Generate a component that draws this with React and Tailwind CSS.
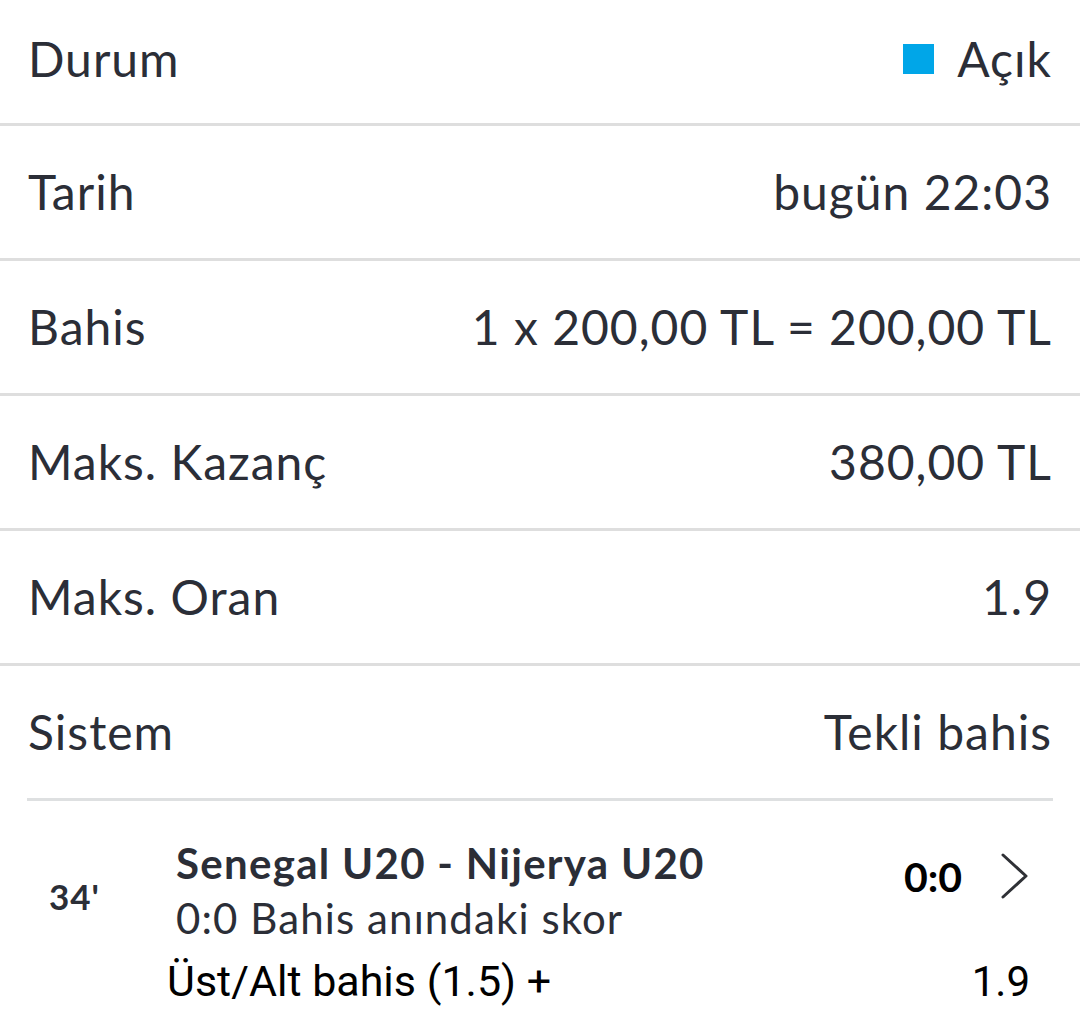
import React from 'react';

const rows = [
  { label: 'Durum', value: 'Açık', status: true },
  { label: 'Tarih', value: 'bugün 22:03' },
  { label: 'Bahis', value: '1 x 200,00 TL = 200,00 TL' },
  { label: 'Maks. Kazanç', value: '380,00 TL' },
  { label: 'Maks. Oran', value: '1.9' },
  { label: 'Sistem', value: 'Tekli bahis' },
];

const ChevronRight = () => (
  <svg width="30" height="46" viewBox="0 0 30 46" fill="none">
    <path d="M3 2 L26 23 L3 44" stroke="#2f3136" strokeWidth="3" strokeLinecap="round" strokeLinejoin="round" />
  </svg>
);

export default function App() {
  return (
    <div className="w-[1080px] h-[1034px] bg-white overflow-hidden text-[#2b2e37]" style={{ fontFamily: 'Lato, "Noto Sans", sans-serif' }}>
      {rows.map((row, i) => (
        <div key={row.label}>
          <div className={`flex items-center justify-between px-[28px] ${i === 0 ? 'h-[123px] pb-[5px]' : 'h-[132px]'}`}>
            <span className="text-[48px] leading-none tracking-[1px]">{row.label}</span>
            <span className="flex items-center text-[48px] leading-none tracking-[1px]">
              {row.status && <span className="w-[31px] h-[30px] bg-[#00a6e8] mr-[23px]"></span>}
              {row.value}
            </span>
          </div>
          {i < rows.length - 1 ? (
            <div className="h-[3px] bg-[#dedede]"></div>
          ) : (
            <div className="mx-[27px] h-[3px] bg-[#dee0e1]"></div>
          )}
        </div>
      ))}

      <div className="flex pt-[38px] pl-[49px] pr-[50px]">
        <div className="w-[127px] pt-[40px] text-[35px] font-bold leading-none tracking-[1px]">34'</div>
        <div className="flex-1">
          <div className="flex justify-between items-start">
            <div>
              <div className="text-[42px] font-bold leading-[48px] tracking-[1.3px]">Senegal U20 - Nijerya U20</div>
              <div className="text-[42px] leading-[48px] mt-[7px] tracking-[1.1px]">0:0 Bahis anındaki skor</div>
            </div>
            <div className="flex items-center gap-[38px] pt-[14px]">
              <span className="text-[41px] font-bold text-black leading-none">0:0</span>
              <ChevronRight />
            </div>
          </div>
        </div>
      </div>
      <div className="flex justify-between items-center pl-[167px] pr-[50px] mt-[18px] text-black" style={{ fontFamily: 'Roboto, sans-serif' }}>
        <span className="text-[43px] leading-none">Üst/Alt bahis (1.5) +</span>
        <span className="text-[42px] leading-none">1.9</span>
      </div>
    </div>
  );
}
